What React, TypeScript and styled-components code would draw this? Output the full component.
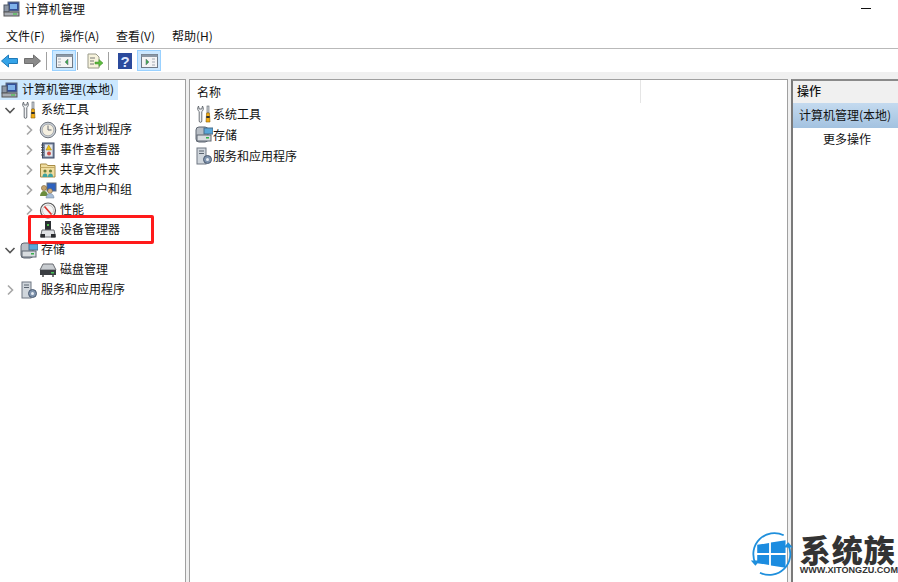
import React from "react";
import styled, { createGlobalStyle } from "styled-components";

const Global = createGlobalStyle`
  html, body { margin: 0; padding: 0; background: #fff; }
  body { font-family: "Noto Sans CJK SC", "Liberation Sans", sans-serif; font-size: 12px; color: #111; }
`;

const Win = styled.div`
  position: relative; width: 898px; height: 582px; overflow: hidden; background: #fff;
  display: flex; flex-direction: column;
`;
const TitleBar = styled.div`
  height: 19px; display: flex; align-items: center; padding-left: 3px; gap: 4px; position: relative;
`;
const TitleText = styled.span` font-size: 12px; line-height: 18px; margin-top: -2px; `;
const Minimize = styled.div`
  position: absolute; left: 861px; top: 8px; width: 10px; height: 1px; background: #111;
`;
const MenuBar = styled.div`
  height: 30px; box-sizing: border-box; padding: 8px 0 0 6px; display: flex;
  border-bottom: 1px solid #b9b9b9;
`;
const MenuItem = styled.span<{ $w: number }>` font-size: 12px; line-height: 18px; width: ${p => p.$w}px; white-space: nowrap; `;
const ToolBar = styled.div`
  height: 23px; display: flex; align-items: center; padding-left: 0;
`;
const ToolIcon = styled.div<{ $on?: boolean; $w: number; $ml?: number }>`
  width: ${p => p.$w}px; height: 21px; box-sizing: border-box; display: flex; align-items: center; justify-content: center;
  margin-left: ${p => p.$ml ?? 0}px;
  background: ${p => (p.$on ? "#cce8ff" : "transparent")};
  border: ${p => (p.$on ? "1px solid #99d1ff" : "0")};
`;
const Sep = styled.div<{ $l: number; $r: number }>`
  width: 1px; height: 18px; background: #a0a0a0; margin: 0 ${p => p.$r}px 0 ${p => p.$l}px;
`;
const Panes = styled.div`
  flex: 1; background: #f0f0f0; padding-top: 7px; display: flex; min-height: 0;
`;
const TreePane = styled.div`
  width: 186px; box-sizing: border-box; background: #fff; border-top: 1px solid #a0a0a0; border-right: 1px solid #a0a0a0;
  flex: none;
`;
const CenterPane = styled.div`
  width: 599px; margin-left: 3px; box-sizing: border-box; background: #fff; flex: none;
  border: 1px solid #a0a0a0; border-bottom: 0;
`;
const ActionPane = styled.div`
  width: 107px; margin-left: 3px; box-sizing: border-box; background: #fff; flex: none;
  border-left: 2px solid #7a7a7a; border-top: 2px solid #8a8a8a;
`;
const TreeRow = styled.div<{ $level: number; $selected?: boolean }>`
  height: 20px; display: flex; align-items: center; padding-left: ${p => p.$level}px; gap: 3px;
  width: ${p => (p.$selected ? "118px" : "auto")}; box-sizing: border-box;
  background: ${p => (p.$selected ? "#cce8ff" : "transparent")};
  white-space: nowrap; line-height: 18px;
`;
const Label = styled.span` margin-top: -2px; `;
const IconBox = styled.div`
  width: 18px; height: 18px; flex: none; display: flex; align-items: center; justify-content: center;
`;
const Arrow = styled.svg` width: 12px; height: 12px; flex: none; margin-right: 1px; `;
const Slot = styled.div` width: 13px; flex: none; `;
const ColHead = styled.div`
  height: 23px; display: flex; align-items: center; padding: 0 0 1px 7px; box-sizing: border-box;
  width: 451px; border-right: 1px solid #e5e5e5;
`;
const ListRow = styled.div`
  height: 21px; display: flex; align-items: center; padding-left: 5px; white-space: nowrap;
`;
const ListIcon = styled(IconBox)` margin-right: 0; `;
const ActionHead = styled.div`
  height: 22px; box-sizing: border-box; padding: 0 0 3px 4px; background: #f0f0f0; font-weight: 500; display: flex; align-items: center;
`;
const ActionSel = styled.div`
  height: 25px; box-sizing: border-box; padding: 0 0 2px 6px; background: linear-gradient(#c4daef, #a3c2e0); display: flex; align-items: center; white-space: nowrap;
`;
const ActionItem = styled.div` height: 20px; display: flex; align-items: center; padding-left: 30px; `;
const Callout = styled.div`
  position: absolute; left: 28px; top: 215px; width: 126px; height: 29px; box-sizing: border-box;
  border: 3px solid #ff1a1a; border-radius: 2px; pointer-events: none;
`;
const Stamp = styled.div`
  position: absolute; left: 749px; top: 528px; width: 149px; height: 54px; display: flex; gap: 5px;
`;
const StampText = styled.div` display: flex; flex-direction: column; padding-top: 5px; `;
const StampName = styled.div`
  font-size: 31px; line-height: 32px; font-weight: 900; color: #333; letter-spacing: 1px; white-space: nowrap;
`;
const StampUrl = styled.div`
  font-family: "Liberation Sans", sans-serif; font-size: 9.1px; line-height: 9px; margin-top: 1px; font-weight: 700; color: #333; white-space: nowrap;
`;

const Chev = ({ open }: { open?: boolean }) => (
  <Arrow viewBox="0 0 12 12">
    {open
      ? <path d="M1.500 4 6 8.500 10.500 4" fill="none" stroke="#555" strokeWidth="1.600" />
      : <path d="M4 1.500 8.500 6 4 10.500" fill="none" stroke="#a6a6a6" strokeWidth="1.600" />}
  </Arrow>
);

const Computer = () => (
  <svg width="18" height="17" viewBox="0 0 18 17">
    <rect x="5" y="1" width="11" height="9" fill="#33509a" stroke="#5e6a7c" />
    <rect x="7" y="3" width="7" height="5" fill="#7fb2ea" />
    <rect x="1" y="4" width="5" height="7" fill="#8d97a5" stroke="#4e5866" />
    <rect x="1" y="11" width="15" height="4" fill="#a8adb4" stroke="#555" />
    <rect x="10" y="12.500" width="4" height="1" fill="#3c3" />
  </svg>
);
const Tools = () => (
  <svg width="16" height="18" viewBox="0 0 16 18">
    <path d="M2.500 1C1 3.500 1.800 5.800 3.200 6.500V16a1.300 1.300 0 0 0 2.600 0V6.500C7.200 5.800 8 3.500 6.500 1L5.800 4H3.200z" fill="#f0f2f4" stroke="#5b6168" strokeWidth=".9" />
    <rect x="11" y="1" width="2" height="7" fill="#cdd2d8" stroke="#5b6168" strokeWidth=".6" />
    <path d="M10.600 8h2.800l.6 9h-4z" fill="#f2ad14" stroke="#8a5e06" strokeWidth=".6" />
    <rect x="10.300" y="11" width="3.400" height="2" fill="#30302c" />
  </svg>
);
const Clock = () => (
  <svg width="18" height="18" viewBox="0 0 18 18">
    <circle cx="9" cy="9" r="7.800" fill="#c9cfd6" stroke="#70767e" />
    <circle cx="9" cy="9" r="5.800" fill="#f4efe0" stroke="#8e9299" strokeWidth=".6" />
    <path d="M9 4.500V9h3.500" fill="none" stroke="#6a6f78" strokeWidth="1" />
  </svg>
);
const EventLog = () => (
  <svg width="16" height="17" viewBox="0 0 16 17">
    <rect x="2.500" y="1" width="11.500" height="15" fill="#7b89a3" stroke="#3c4a66" />
    <rect x="5" y="2.500" width="7.500" height="12" fill="#e4e7ec" />
    <path d="M1 3h3M1 5.500h3M1 8h3M1 10.500h3M1 13h3" stroke="#444" strokeWidth=".8" />
    <path d="M8.700 3 11.500 8H6z" fill="#f2c418" stroke="#9a7a08" strokeWidth=".5" />
    <circle cx="9" cy="11.500" r="2" fill="#c8504a" />
  </svg>
);
const SharedFolder = () => (
  <svg width="18" height="17" viewBox="0 0 18 17">
    <path d="M1.500 2h6l1 1.500h7.500V15h-14.500z" fill="#f0dda0" stroke="#a78c46" />
    <path d="M1.500 5.500h14.500" stroke="#c4ab66" />
    <circle cx="6" cy="9" r="1.600" fill="#6b7f3a" />
    <circle cx="11.500" cy="9" r="1.600" fill="#6b7f3a" />
    <path d="M3.500 15c0-2.500 1-3.500 2.500-3.500s2.500 1 2.500 3.500zM9 15c0-2.500 1-3.500 2.500-3.500s2.500 1 2.500 3.500z" fill="#3fa3a0" />
  </svg>
);
const Users = () => (
  <svg width="18" height="17" viewBox="0 0 18 17">
    <rect x="8" y="1" width="9" height="8" fill="#2e62bf" stroke="#606a78" />
    <circle cx="5" cy="6" r="2.600" fill="#c4a26a" stroke="#6b532c" strokeWidth=".5" />
    <path d="M1 14c0-3 2-5 4-5s4 2 4 5z" fill="#6c8c3e" />
    <circle cx="11" cy="9" r="2.400" fill="#d8b584" stroke="#6b532c" strokeWidth=".5" />
    <path d="M7 16c0-3 2-4.500 4-4.500s4 1.500 4 4.500z" fill="#a6bdd8" stroke="#6b7c92" strokeWidth=".5" />
  </svg>
);
const Gauge = () => (
  <svg width="18" height="17" viewBox="0 0 18 17">
    <circle cx="9" cy="8.500" r="7.500" fill="#f5f5f5" stroke="#5a5a5a" strokeWidth="1.200" />
    <circle cx="9" cy="8.500" r="5.500" fill="none" stroke="#bbb" strokeWidth=".8" />
    <path d="M5.500 4.500l7 8" stroke="#d8342c" strokeWidth="1.700" />
  </svg>
);
const DeviceMgr = () => (
  <svg width="18" height="18" viewBox="0 0 18 18">
    <rect x="6" y="0" width="6" height="10" fill="#2c2f33" />
    <rect x="8" y="3" width="2" height="2" fill="#4fc14f" />
    <path d="M3 9h12l1.500 7h-15z" fill="#dfe1e4" stroke="#6a6d72" />
    <rect x="1.500" y="13" width="4.500" height="3.500" fill="#2b2d30" />
    <rect x="12" y="13" width="4.500" height="3.500" fill="#2b2d30" />
  </svg>
);
const Storage = () => (
  <svg width="18" height="17" viewBox="0 0 18 17">
    <rect x="1" y="1" width="12" height="15" rx="3" fill="#b8bec5" stroke="#5f6772" />
    <rect x="9" y="2" width="9" height="6" fill="#5aa6d8" stroke="#486d8a" />
    <rect x="2" y="9" width="14" height="6" fill="#d8dce0" stroke="#5f6772" />
    <rect x="11" y="11" width="3" height="1.500" fill="#35b04a" />
  </svg>
);
const Disk = () => (
  <svg width="18" height="17" viewBox="0 0 18 17">
    <path d="M4 2h10l3 6H1z" fill="#c8ccd0" stroke="#6a6d72" />
    <rect x="1" y="8" width="16" height="5" fill="#3a3d42" />
    <rect x="12" y="10" width="3" height="1.500" fill="#46c456" />
    <rect x="3" y="13" width="2" height="2" fill="#777" />
    <rect x="13" y="13" width="2" height="2" fill="#777" />
  </svg>
);
const Services = () => (
  <svg width="18" height="18" viewBox="0 0 18 18">
    <rect x="2" y="1" width="9" height="16" fill="#d0d6dc" stroke="#6f7782" />
    <path d="M4 4h5M4 6.500h5" stroke="#5a6470" />
    <circle cx="12.500" cy="12.500" r="4" fill="#7f93ad" stroke="#4a5a70" />
    <circle cx="12.500" cy="12.500" r="1.500" fill="#e7ecf2" />
  </svg>
);
const Back = () => (
  <svg width="17" height="14" viewBox="0 0 17 14">
    <path d="M.5 7 7.500 1v3.500h9v5h-9V13z" fill="#35a3e8" stroke="#1f7ab8" />
  </svg>
);
const Forward = () => (
  <svg width="17" height="14" viewBox="0 0 17 14">
    <path d="M16.500 7 9.500 1v3.500h-9v5h9V13z" fill="#8a8a8a" stroke="#6f6f6f" />
  </svg>
);
const PaneIcon = ({ right }: { right?: boolean }) => (
  <svg width="17" height="14" viewBox="0 0 17 14">
    <rect x=".5" y=".5" width="16" height="13" fill="#f4f4f4" stroke="#6f7a86" />
    <rect x=".5" y=".5" width="16" height="2.500" fill="#8b98a6" />
    {right
      ? <path d="M5 5v6l3-3zM11 5h3M11 8h3M11 11h3" fill="#3dab4b" stroke="#6f7a86" strokeWidth=".6" />
      : <path d="M12 5v6l-3-3zM2 5h3M2 8h3M2 11h3" fill="#3dab4b" stroke="#6f7a86" strokeWidth=".6" />}
  </svg>
);
const Export = () => (
  <svg width="18" height="16" viewBox="0 0 18 16">
    <path d="M2 1h8l3 3v11H2z" fill="#f7f3dc" stroke="#9a9a8a" />
    <path d="M4 5h5M4 8h4M4 11h4" stroke="#777" />
    <path d="M9 9h4V6.500L17 10l-4 3.500V11H9z" fill="#5dbb3f" stroke="#3f8e2a" strokeWidth=".5" />
  </svg>
);
const Help = () => (
  <svg width="14" height="16" viewBox="0 0 14 16">
    <rect width="14" height="16" fill="#2b4a9c" />
    <text x="7" y="13.500" fontSize="15" fontWeight="700" fill="#dfe8ff" textAnchor="middle" fontFamily="Liberation Sans">?</text>
  </svg>
);
const WinMark = () => (
  <svg width="50" height="52" viewBox="0 0 50 52">
    <path d="M7 36A23 23 0 0 1 38 5.500" fill="none" stroke="#1f8fdc" strokeWidth="2" />
    <path d="M43 16A23 23 0 0 1 12 46.500" fill="none" stroke="#1f8fdc" strokeWidth="2" />
    <path d="M2 33l5 6 5-6zM48 19l-5-6-5 6z" fill="#1f8fdc" />
    <path d="M9 16l13-2v11H9zM24 13.500 40 11v14H24zM9 27h13v11l-13-2zM24 27h16v14l-16-2.500z" fill="#1b8ce0" />
  </svg>
);

const tree: [number, boolean | null, React.ReactNode, string][] = [
  [4, true, <Tools key="a" />, "系统工具"],
  [23, false, <Clock key="b" />, "任务计划程序"],
  [23, false, <EventLog key="c" />, "事件查看器"],
  [23, false, <SharedFolder key="d" />, "共享文件夹"],
  [23, false, <Users key="e" />, "本地用户和组"],
  [23, false, <Gauge key="f" />, "性能"],
  [23, null, <DeviceMgr key="g" />, "设备管理器"],
  [4, true, <Storage key="h" />, "存储"],
  [23, null, <Disk key="i" />, "磁盘管理"],
  [4, false, <Services key="j" />, "服务和应用程序"],
];

export default function App() {
  return (
    <Win>
      <Global />
      <TitleBar>
        <Computer />
        <TitleText>计算机管理</TitleText>
        <Minimize />
      </TitleBar>
      <MenuBar>
        <MenuItem $w={54}>文件(F)</MenuItem>
        <MenuItem $w={56}>操作(A)</MenuItem>
        <MenuItem $w={56}>查看(V)</MenuItem>
        <MenuItem $w={50}>帮助(H)</MenuItem>
      </MenuBar>
      <ToolBar>
        <ToolIcon $w={18}><Back /></ToolIcon>
        <ToolIcon $w={18} $ml={5}><Forward /></ToolIcon>
        <Sep $l={5} $r={5} />
        <ToolIcon $on $w={24}><PaneIcon /></ToolIcon>
        <Sep $l={1} $r={8} />
        <ToolIcon $w={18}><Export /></ToolIcon>
        <Sep $l={4} $r={9} />
        <ToolIcon $w={14}><Help /></ToolIcon>
        <ToolIcon $on $w={24} $ml={5}><PaneIcon right /></ToolIcon>
      </ToolBar>
      <Panes>
        <TreePane>
          <TreeRow $level={1} $selected><Computer /><Label>计算机管理(本地)</Label></TreeRow>
          {tree.map(([lvl, open, icon, label]) => (
            <TreeRow key={label} $level={lvl}>
              {open === null ? <Slot /> : <Chev open={open} />}
              <IconBox>{icon}</IconBox>
              <Label>{label}</Label>
            </TreeRow>
          ))}
        </TreePane>
        <CenterPane>
          <ColHead>名称</ColHead>
          <ListRow><ListIcon><Tools /></ListIcon>系统工具</ListRow>
          <ListRow><ListIcon><Storage /></ListIcon>存储</ListRow>
          <ListRow><ListIcon><Services /></ListIcon>服务和应用程序</ListRow>
        </CenterPane>
        <ActionPane>
          <ActionHead>操作</ActionHead>
          <ActionSel>计算机管理(本地)</ActionSel>
          <ActionItem>更多操作</ActionItem>
        </ActionPane>
      </Panes>
      <Callout />
      <Stamp>
        <WinMark />
        <StampText>
          <StampName>系统族</StampName>
          <StampUrl>WWW.XITONGZU.COM</StampUrl>
        </StampText>
      </Stamp>
    </Win>
  );
}
